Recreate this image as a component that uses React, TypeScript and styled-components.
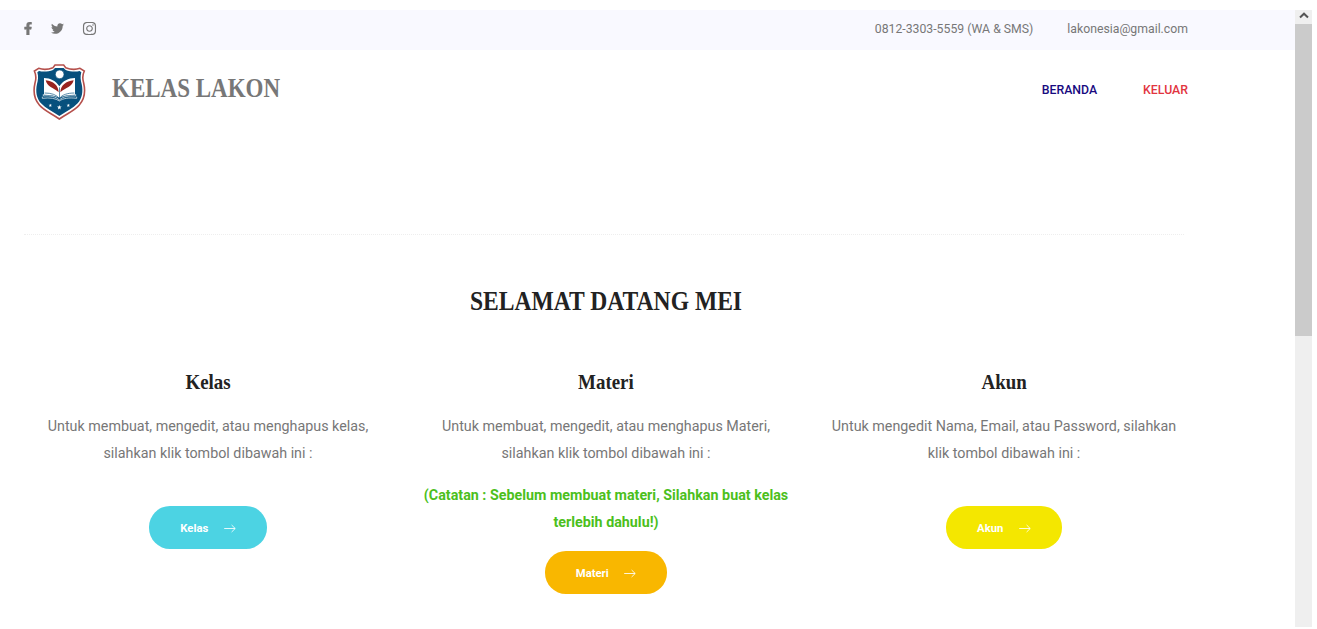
import React from 'react';
import styled, { createGlobalStyle } from 'styled-components';
import { FaFacebookF, FaTwitter, FaInstagram } from 'react-icons/fa';

const GlobalStyle = createGlobalStyle`
  * { box-sizing: border-box; }
  body {
    margin: 0;
    background: #fff;
    color: #777;
    font-family: Roboto, "Liberation Sans", sans-serif;
    overflow: hidden;
  }
  h1, h2, h3, p { margin: 0; }
  a { text-decoration: none; color: inherit; }
`;

const Screen = styled.div`
  display: flex;
  width: 1317px;
  height: 629px;
  padding: 10px 5px 2px 0;
`;

const Page = styled.div`
  flex: 1;
  min-width: 0;
`;

const TopBar = styled.div`
  display: flex;
  align-items: center;
  justify-content: space-between;
  height: 39.5px;
  padding: 0 107px 2.5px 24px;
  background: #f9f9ff;
`;

const Social = styled.div`
  display: flex;
  align-items: center;
  color: #777;
`;

const SocialLink = styled.a<{ $gap?: number }>`
  display: flex;
  margin-left: ${(p) => p.$gap ?? 0}px;
`;

const Contacts = styled.div`
  display: flex;
  gap: 34px;
  font-size: 12.25px;
  line-height: 18px;
`;

const Header = styled.header`
  display: flex;
  align-items: center;
  height: 78.5px;
  padding: 6px 107px 0 33px;
`;

const Brand = styled.h1`
  flex: 1;
  margin: -8px 0 0 26px;
  font: 700 26.5px/32px "Liberation Serif", serif;
  transform: scaleX(0.868);
  transform-origin: left center;
`;

const Nav = styled.nav`
  display: flex;
  gap: 46px;
  margin-top: -3px;
  font-size: 12.3px;
  font-weight: 500;
`;

const NavLink = styled.a<{ $color: string }>`
  color: ${(p) => p.$color};
`;

const Divider = styled.hr`
  width: 1160px;
  height: 0;
  margin: 106px 0 0 24px;
  border: 0;
  border-top: 1px dotted #eee;
`;

const Main = styled.main`
  width: 1194px;
  margin-left: 9px;
  text-align: center;
`;

const Welcome = styled.h2`
  padding-top: 49px;
  color: #222;
  font: 700 26.5px/34px "Liberation Serif", serif;
  transform: scaleX(0.89);
`;

const Columns = styled.div`
  display: grid;
  grid-template-columns: repeat(3, 1fr);
  margin-top: 51px;
`;

const Column = styled.section`
  display: flex;
  flex-direction: column;
  align-items: center;
`;

const Title = styled.h3`
  color: #222;
  font: 700 21px/26px "Liberation Serif", serif;
  transform: scaleX(0.9);
`;

const Text = styled.p`
  margin-top: 18px;
  font-size: 14.3px;
  line-height: 26.5px;
`;

const Note = styled(Text)`
  margin-top: 16px;
  color: #4cbf1c;
  font-weight: 700;
`;

const Button = styled.a<{ $color: string; $top: number }>`
  display: flex;
  align-items: center;
  gap: 15.5px;
  height: 43px;
  margin-top: ${(p) => p.$top}px;
  padding: 1.5px 31px 0;
  border-radius: 21px;
  background: ${(p) => p.$color};
  color: #fff;
  font-size: 11.3px;
  font-weight: 700;
`;

const ScrollBar = styled.div`
  width: 17px;
  background: #efefef;
`;

const ScrollUp = styled.div`
  display: flex;
  justify-content: center;
  height: 14px;
  padding-top: 1px;
`;

const Thumb = styled.div`
  height: 312px;
  background: #cbcbcb;
`;

const Arrow = () => (
  <svg width="12" height="9" viewBox="0 0 12 9" fill="none" stroke="#fff" strokeWidth="0.85">
    <path d="M0.2 4.5H11.2M7.6 1L11.2 4.5L7.6 8" />
  </svg>
);

const STAR = 'M0-6 1.5-2 6-2 2.5 1 3.7 5.5 0 3-3.7 5.5-2.5 1-6-2-1.5-2Z';

const Crest = () => (
  <svg width="53" height="56" viewBox="39 28 159 168">
    <path
      d="M105 31H131L137 39C149 44 166 46 180 41L193 49C187 61 187 72 191 85C197 111 193 134 178 151C164 168 142 176 118 193C94 176 72 168 58 151C43 134 39 111 45 85C49 72 49 61 43 49L56 41C70 46 87 44 99 39Z"
      fill="#fff"
      stroke="#b5504c"
      strokeWidth="4.8"
    />
    <path
      d="M105 40L99 46C86 51 69 52 57 49L52 53C56 66 54 77 51 88C46 111 50 131 63 146C77 161 97 170 118 184C139 170 159 161 173 146C186 131 190 111 185 88C182 77 180 66 184 53L179 49C167 52 150 51 137 46L131 40Z"
      fill="#07507d"
    />
    <circle cx="119" cy="59" r="13" fill="#fff" stroke="#07507d" strokeWidth="2" />
    <path d="M72 70C91 70 108 79 118 95C128 79 145 70 165 70V120C145 120 129 122 118 130C107 122 91 120 72 120Z" fill="#fff" />
    <path d="M116 113C115 92 100 79 77 77C82 97 99 98 116 113Z" fill="#98231f" />
    <path d="M121 113C122 92 138 79 161 77C156 97 138 98 121 113Z" fill="#98231f" />
    <path d="M118.500 98V132" stroke="#07507d" strokeWidth="2" />
    <path d="M74 115C94 115 109 120 118 131C127 120 143 115 163 115" fill="none" stroke="#07507d" strokeWidth="2" />
    <path
      d="M70 118V124C91 122 108 126 118 136C128 126 146 122 167 124V118M67 126V131C90 128 107 131 118 139C129 131 147 128 170 131V126"
      fill="none"
      stroke="#fff"
      strokeWidth="2"
    />
    <path d={STAR} transform="translate(91 152) scale(.85)" fill="#fff" />
    <path d={STAR} transform="translate(118 158) scale(1.15)" fill="#fff" />
    <path d={STAR} transform="translate(145 152) scale(.85)" fill="#fff" />
  </svg>
);

export default function App() {
  return (
    <>
      <GlobalStyle />
      <Screen>
        <Page>
          <TopBar>
            <Social>
              <SocialLink><FaFacebookF width={8} size={13} viewBox="0 0 320 512" preserveAspectRatio="xMinYMid meet" stroke="currentColor" strokeWidth={20} /></SocialLink>
              <SocialLink $gap={14}><FaTwitter size={13} /></SocialLink>
              <SocialLink $gap={18}><FaInstagram size={15} /></SocialLink>
            </Social>
            <Contacts>
              <a>0812-3303-5559 (WA &amp; SMS)</a>
              <a>lakonesia@gmail.com</a>
            </Contacts>
          </TopBar>
          <Header>
            <Crest />
            <Brand>KELAS LAKON</Brand>
            <Nav>
              <NavLink $color="#170a80">BERANDA</NavLink>
              <NavLink $color="#e2353f">KELUAR</NavLink>
            </Nav>
          </Header>
          <Divider />
          <Main>
            <Welcome>SELAMAT DATANG MEI</Welcome>
            <Columns>
              <Column>
                <Title>Kelas</Title>
                <Text>
                  Untuk membuat, mengedit, atau menghapus kelas,
                  <br />
                  silahkan klik tombol dibawah ini :
                </Text>
                <Button $color="#4cd3e3" $top={40.3}>Kelas<Arrow /></Button>
              </Column>
              <Column>
                <Title>Materi</Title>
                <Text>
                  Untuk membuat, mengedit, atau menghapus Materi,
                  <br />
                  silahkan klik tombol dibawah ini :
                </Text>
                <Note>
                  (Catatan : Sebelum membuat materi, Silahkan buat kelas
                  <br />
                  terlebih dahulu!)
                </Note>
                <Button $color="#f9b700" $top={16.3}>Materi<Arrow /></Button>
              </Column>
              <Column>
                <Title>Akun</Title>
                <Text>
                  Untuk mengedit Nama, Email, atau Password, silahkan
                  <br />
                  klik tombol dibawah ini :
                </Text>
                <Button $color="#f4e700" $top={40.3}>Akun<Arrow /></Button>
              </Column>
            </Columns>
          </Main>
        </Page>
        <ScrollBar>
          <ScrollUp>
            <svg width="10" height="8" viewBox="0 0 10 8" fill="none" stroke="#555" strokeWidth="2">
              <path d="M1 6.500L5 2.700L9 6.500" />
            </svg>
          </ScrollUp>
          <Thumb />
        </ScrollBar>
      </Screen>
    </>
  );
}
